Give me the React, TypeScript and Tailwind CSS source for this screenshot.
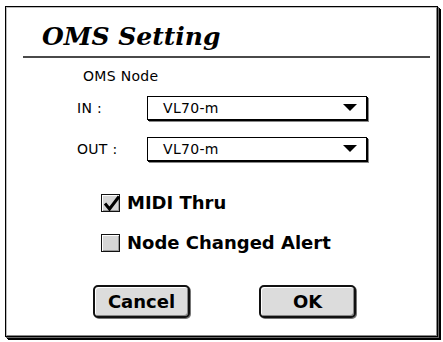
import React from "react";

const sans = { fontFamily: '"DejaVu Sans", Verdana, sans-serif' };

function Popup({ value }: { value: string }) {
  return (
    <div className="w-[220px] h-[24px] border border-black bg-white shadow-[1px_1px_0_#000,2px_2px_0_#888] flex items-center justify-between pl-[15px] pr-[9px]">
      <span className="text-[14px] leading-[16px] tracking-[0.3px] text-black">{value}</span>
      <svg width="14" height="8" viewBox="0 0 14 8">
        <polygon points="0,0 14,0 7,7" fill="#000" />
      </svg>
    </div>
  );
}

function Checkbox({ checked, label }: { checked?: boolean; label: string }) {
  return (
    <div className="flex items-center h-[19px] pl-[94px]">
      <span className="relative w-[19px] h-[18px] border border-[#111] bg-[#d6d6d6] shadow-[inset_1px_1px_0_#fff,inset_-1px_-1px_0_#999]">
        {checked && (
          <svg className="absolute left-0 top-0" width="19" height="18" viewBox="0 0 19 18">
            <path d="M3 8.5 L7.5 14 L17 1.5" fill="none" stroke="#000" strokeWidth="3" />
          </svg>
        )}
      </span>
      <span className="ml-[7px] text-[18px] leading-[20px] font-bold text-black">{label}</span>
    </div>
  );
}

function Button({ children }: { children: React.ReactNode }) {
  return (
    <button className="w-[97px] h-[33px] rounded-[5px] border-2 border-[#111] bg-[#dcdcdc] shadow-[inset_1px_1px_0_#fff,inset_-1px_-1px_0_#888,1px_1px_0_#777] flex items-center justify-center text-[18px] leading-[20px] font-bold text-black">
      {children}
    </button>
  );
}

export default function App() {
  return (
    <div className="w-[443px] h-[342px] bg-white pt-[6px] pl-[5px]" style={sans}>
      <div className="w-[433px] h-[331px] border border-black shadow-[1px_1px_0_#666,2px_2px_0_#000,3px_3px_0_#000]">
        <div className="w-full h-full border border-t-[#bbb] border-l-[#bbb] border-r-[#888] border-b-[#888] bg-white flex flex-col">
          <div
            className="mt-[14px] pl-[35px] text-[25px] leading-[30px] font-bold italic text-black"
            style={{ fontFamily: '"DejaVu Serif", "Liberation Serif", serif' }}
          >
            OMS Setting
          </div>
          <div className="mt-[4px] ml-[16px] w-[407px] h-[2px] bg-[#4a4a4a]" />
          <div className="mt-[10px] pl-[76px] text-[14px] leading-[16px] tracking-[0.3px] text-black">
            OMS Node
          </div>
          <div className="mt-[12px] flex items-center pl-[70px]">
            <span className="w-[70px] text-[14px] leading-[16px] tracking-[0.3px] text-black">IN :</span>
            <Popup value="VL70-m" />
          </div>
          <div className="mt-[17px] flex items-center pl-[70px]">
            <span className="w-[70px] text-[14px] leading-[16px] tracking-[0.3px] text-black">OUT :</span>
            <Popup value="VL70-m" />
          </div>
          <div className="mt-[32px]">
            <Checkbox checked label="MIDI Thru" />
          </div>
          <div className="mt-[21px]">
            <Checkbox label="Node Changed Alert" />
          </div>
          <div className="mt-[33px] flex pl-[86px] gap-[69px]">
            <Button>Cancel</Button>
            <Button>OK</Button>
          </div>
        </div>
      </div>
    </div>
  );
}
